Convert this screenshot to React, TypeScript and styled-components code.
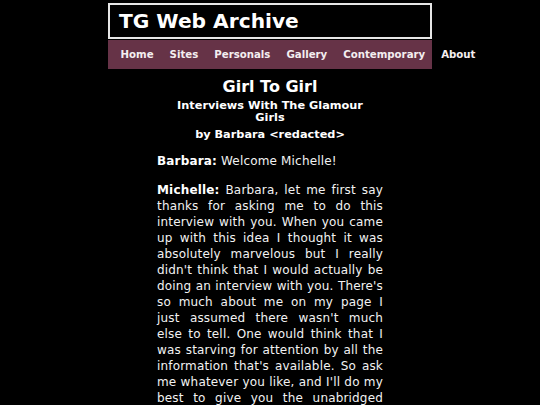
import styled, { createGlobalStyle } from 'styled-components';

const GlobalStyle = createGlobalStyle`
    html, body {
        margin: 0;
        padding: 0;
        background: #000;
    }
    body {
        font-family: 'DejaVu Sans', Verdana, sans-serif;
        color: #f2f2f2;
    }
`;

const Page = styled.div`
    width: 324px;
    margin: 3px auto 0;
`;

const Masthead = styled.header`
    height: 32px;
    border: 2px solid #e6e6e6;
    background: #000;
    padding-left: 9px;
    display: flex;
    align-items: center;
`;

const SiteTitle = styled.h1`
    margin: 0;
    font-size: 20.2px;
    font-weight: bold;
    color: #fff;
`;

const NavBar = styled.nav`
    height: 29px;
    margin-top: 1px;
    background: #663347;
    display: flex;
    align-items: center;
    padding-left: 4.5px;
    white-space: nowrap;
`;

const NavLink = styled.a`
    flex-shrink: 0;
    padding: 0 8px;
    font-size: 10.2px;
    font-weight: bold;
    color: #f4eef0;
    text-decoration: none;
`;

const Article = styled.main`
    width: 226px;
    margin: 0 auto;
`;

const Title = styled.h2`
    margin: 8px 0 4px;
    font-size: 16px;
    line-height: 19px;
    text-align: center;
    color: #fff;
`;

const SubTitle = styled.h3`
    margin: 0 0 5px;
    padding: 0 8px;
    font-size: 11.3px;
    line-height: 12px;
    text-align: center;
    color: #fff;
`;

const Byline = styled.h4`
    margin: 0 0 -1px;
    font-size: 11.3px;
    line-height: 12px;
    text-align: center;
    color: #fff;
`;

const Para = styled.p`
    margin: 13px 0 0;
    font-size: 12px;
    letter-spacing: 0.17px;
    line-height: 16px;
    text-align: justify;
`;

const Speaker = styled.b`
    color: #fff;
`;

const links = ['Home', 'Sites', 'Personals', 'Gallery', 'Contemporary', 'About'];

export default function App() {
    return (
        <>
            <GlobalStyle />
            <Page>
                <Masthead>
                    <SiteTitle>TG Web Archive</SiteTitle>
                </Masthead>
                <NavBar>
                    {links.map(l => <NavLink href="#" key={l}>{l}</NavLink>)}
                </NavBar>
                <Article>
                    <Title>Girl To Girl</Title>
                    <SubTitle>Interviews With The Glamour Girls</SubTitle>
                    <Byline>by Barbara &lt;redacted&gt;</Byline>
                    <Para><Speaker>Barbara:</Speaker> Welcome Michelle!</Para>
                    <Para>
                        <Speaker>Michelle:</Speaker> Barbara, let me first say thanks for asking me to do this
                        interview with you. When you came up with this idea I thought it was absolutely
                        marvelous but I really didn't think that I would actually be doing an interview with
                        you. There's so much about me on my page I just assumed there wasn't much else to
                        tell. One would think that I was starving for attention by all the information that's
                        available. So ask me whatever you like, and I'll do my best to give you the unabridged
                        version.
                    </Para>
                </Article>
            </Page>
        </>
    );
}
